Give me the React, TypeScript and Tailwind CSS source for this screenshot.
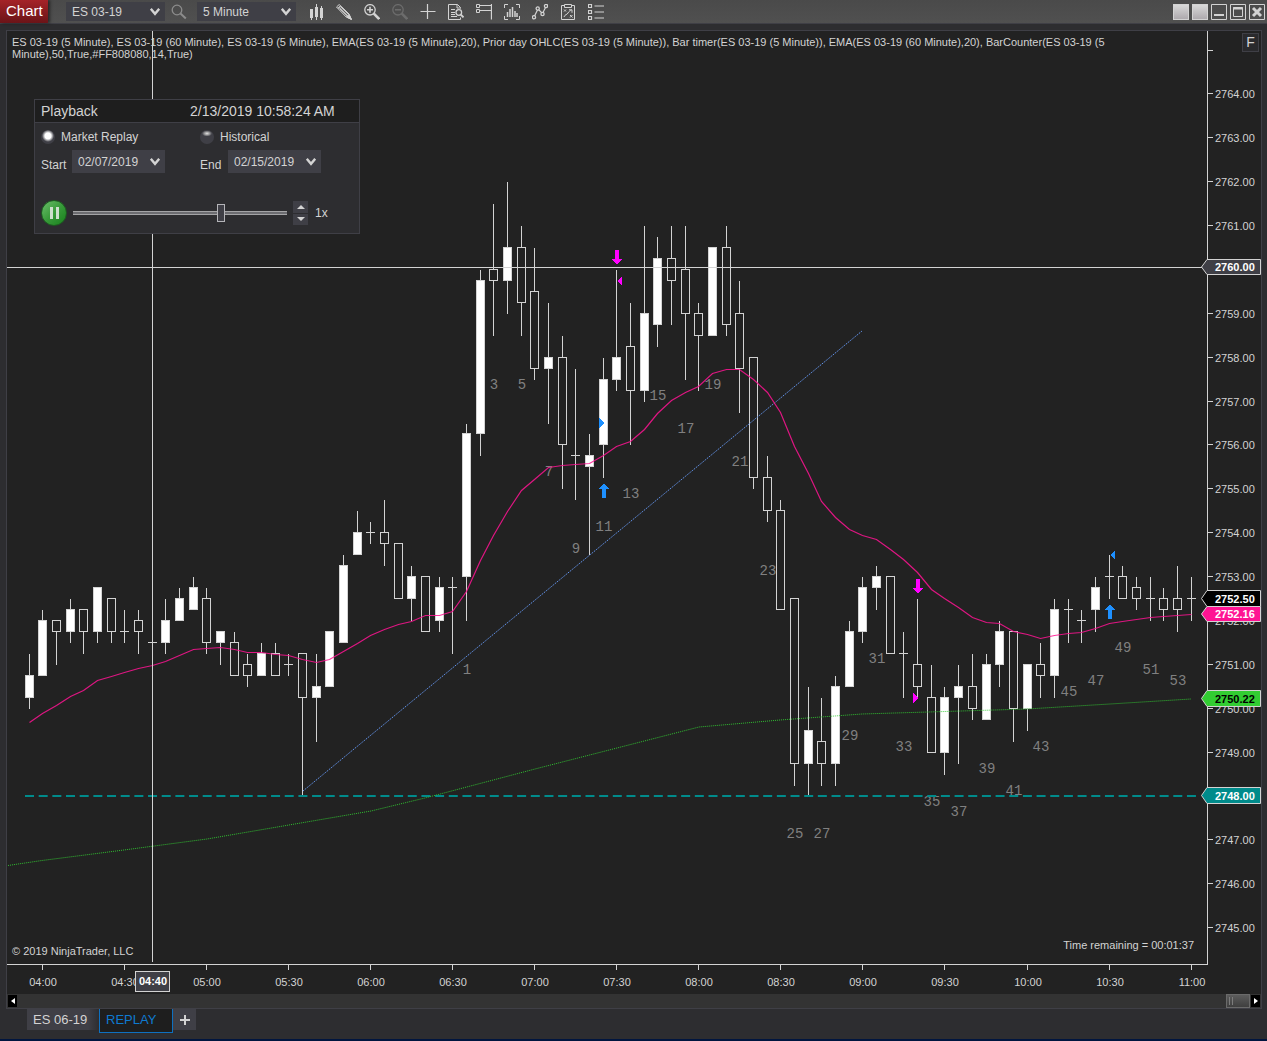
import React, { useState } from "react";

/* ---------- market data (values are quarter-point ticks above 2748.00) ---------- */

// [high, body top, body bottom, low, up?]
type Candle = [number, number, number, number, 0 | 1];

const CANDLES: Candle[] = [
  [13, 11, 9, 8, 1], [17, 16, 11, 11, 1], [16, 16, 15, 12, 0], [18, 17, 15, 14, 1], [17, 17, 15, 13, 0],
  [19, 19, 15, 14, 1], [18, 18, 15, 14, 0], [17, 15, 15, 14, 0], [17, 16, 15, 13, 0], [14, 14, 14, 14, 0],
  [18, 16, 14, 13, 1], [19, 18, 16, 16, 1], [20, 19, 17, 17, 1], [19, 18, 14, 13, 0], [15, 15, 14, 12, 1],
  [15, 14, 11, 11, 0], [13, 12, 11, 10, 0], [14, 13, 11, 11, 1], [14, 13, 11, 11, 0], [13, 12, 12, 11, 0],
  [13, 13, 9, 0, 0], [13, 10, 9, 5, 1], [15, 15, 10, 10, 1], [22, 21, 14, 14, 1], [26, 24, 22, 22, 1],
  [25, 24, 24, 23, 0], [27, 24, 23, 21, 0], [23, 23, 18, 18, 0], [21, 20, 18, 16, 1], [20, 20, 15, 15, 0],
  [20, 19, 16, 15, 1], [20, 19, 19, 13, 0], [34, 33, 20, 16, 1], [48, 47, 33, 31, 1], [54, 48, 47, 42, 0],
  [56, 50, 47, 44, 1], [52, 50, 45, 42, 0], [50, 46, 39, 38, 0], [45, 40, 39, 34, 1], [42, 40, 32, 28, 0],
  [39, 31, 31, 27, 0], [33, 31, 30, 22, 1], [40, 38, 32, 29, 1], [48, 40, 38, 37, 1], [45, 41, 37, 32, 0],
  [52, 44, 37, 36, 1], [51, 49, 43, 41, 1], [52, 49, 47, 43, 0], [52, 48, 44, 38, 0], [45, 44, 42, 37, 0],
  [50, 50, 42, 42, 1], [52, 50, 43, 42, 0], [47, 44, 39, 35, 0], [40, 40, 29, 28, 0], [31, 29, 26, 25, 0],
  [27, 26, 17, 17, 0], [18, 18, 3, 1, 0], [10, 6, 3, 0, 1], [9, 5, 3, 1, 0], [11, 10, 3, 1, 1],
  [16, 15, 10, 10, 1], [20, 19, 15, 14, 1], [21, 20, 19, 17, 1], [20, 20, 13, 13, 0], [15, 13, 13, 9, 0],
  [18, 12, 10, 9, 0], [12, 9, 4, 4, 0], [10, 9, 4, 2, 1], [12, 10, 9, 3, 1], [13, 10, 8, 7, 0],
  [13, 12, 7, 7, 1], [16, 15, 12, 10, 1], [15, 15, 8, 5, 0], [12, 12, 8, 6, 1], [14, 12, 11, 9, 0],
  [18, 17, 11, 9, 1], [18, 17, 17, 14, 0], [17, 16, 16, 14, 0], [20, 19, 17, 15, 1], [22, 20, 20, 18, 0],
  [21, 20, 18, 18, 0], [20, 19, 18, 17, 0], [20, 18, 18, 16, 0], [19, 18, 17, 16, 0], [21, 18, 17, 15, 0],
  [20, 18, 18, 16, 0],
];

const EMA: number[] = [
  722, 713, 705, 696, 690, 680, 676, 672, 668, 665, 661, 655, 649, 648, 647, 649, 652, 652, 654, 655, 659, 662,
  659, 651, 643, 635, 629, 624, 621, 615, 615, 611, 591, 560, 535, 511, 490, 479, 467, 465, 464, 463, 455, 446,
  441, 429, 413, 400, 392, 386, 373, 369, 369, 379, 392, 412, 446, 473, 501, 517, 529, 535, 539, 549, 559, 572,
  589, 598, 607, 617, 622, 623, 631, 634, 638, 635, 633, 632, 628, 623, 621, 619, 617, 616, 615, 614,
];

// [bar number, baseline]
const BAR_NUMBERS: [number, number][] = [
  [1, 674], [3, 389], [5, 389], [7, 476], [9, 553], [11, 531], [13, 498], [15, 400], [17, 433], [19, 389],
  [21, 466], [23, 575], [25, 838], [27, 838], [29, 740], [31, 663], [33, 751], [35, 806], [37, 816], [39, 773],
  [41, 795], [43, 751], [45, 696], [47, 685], [49, 652], [51, 674], [53, 685],
];

const TIMES = ["04:00", "04:30", "05:00", "05:30", "06:00", "06:30", "07:00", "07:30", "08:00", "08:30", "09:00", "09:30", "10:00", "10:30", "11:00"];

const barX = (i: number) => Math.floor(29.1 + i * 13.67);
const tickY = (t: number) => Math.floor(796 - t * 10.97);

/* ---------- chart ---------- */

function CandleMark({ c, i }: { c: Candle; i: number }) {
  const [high, top, bottom, low, up] = c;
  const x = barX(i);
  const yTop = tickY(top);
  const yBottom = tickY(bottom);
  return (
    <g stroke="#d3d3d3" shapeRendering="crispEdges">
      {high > top && <path d={`M${x + 0.5} ${tickY(high) + 1}V${yTop}`} />}
      {low < bottom && <path d={`M${x + 0.5} ${yBottom}V${tickY(low) + 1}`} />}
      {top === bottom ? (
        <path d={`M${x - 4} ${yTop + 0.5}H${x + 5}`} />
      ) : (
        <rect x={x - 3.5} y={yTop + 0.5} width={8} height={yBottom - yTop} fill={up ? "#ffffff" : "none"} />
      )}
    </g>
  );
}

function PriceTag({ y, h, fill, color = "#ffffff", children }: { y: number; h: number; fill: string; color?: string; children: string }) {
  return (
    <g>
      <path d={`M1201.5 ${y + h / 2}L1207 ${y + 0.5}H1260.5V${y + h - 0.5}H1207Z`} fill={fill} stroke="#d3d3d3" />
      <text x={1215} y={y + h / 2 + 4} fontSize={11} fontWeight={700} fill={color}>
        {children}
      </text>
    </g>
  );
}

const arrowDown = (x: number, y: number) => `M${x - 2} ${y}h4v9h3l-5 6l-5-6h3z`;
const arrowUp = (x: number, y: number) => `M${x} ${y}l5 6h-3v9h-4v-9h-3z`;

function Chart() {
  const ticks = Array.from({ length: 21 }, (_, k) => 2765 - k);
  return (
    <svg viewBox="7 31 1254 963" className="block w-full bg-[#222222]" fontFamily='"Liberation Sans", Arial, sans-serif' role="img" aria-label="ES 03-19 5 minute chart">
      <g fill="#d3d3d3" fontSize={11}>
        <text x={12} y={955}>© 2019 NinjaTrader, LLC</text>
        <text x={1194} y={949} textAnchor="end">Time remaining = 00:01:37</text>
      </g>

      {CANDLES.map((c, i) => (
        <CandleMark key={i} c={c} i={i} />
      ))}

      <g fontFamily='"Liberation Mono", "Courier New", monospace' fontSize={14} fill="#808080" textAnchor="middle">
        {BAR_NUMBERS.map(([n, y]) => (
          <text key={n} x={barX(n + 31) + 1} y={y}>{n}</text>
        ))}
      </g>

      <path d="M25 796H1197" stroke="#008b8b" strokeWidth={2} strokeDasharray="9 4.67" />
      <polyline
        points="8,865.5 42,860.5 124,850 207,839 289,825 371,811 425,798 535,769 699,727 780,720 862,714 945,711.5 1027,709 1110,704 1191,699"
        fill="none" stroke="#32cd32" strokeOpacity={0.9} strokeDasharray="1 1"
      />
      <path d="M303 791L862 331" stroke="#6495ed" strokeDasharray="1.4 1" />
      <polyline points={EMA.map((y, i) => `${barX(i) + 0.5},${y + 0.5}`).join(" ")} fill="none" stroke="#ff1493" strokeOpacity={0.85} strokeWidth={1.2} />

      <g shapeRendering="crispEdges">
        <path fill="#ff00ff" d={arrowDown(617, 250)} />
        <path fill="#ff00ff" d={arrowDown(918, 579)} />
        <path fill="#ff00ff" d="M617 281l5-5v10z" />
        <path fill="#ff00ff" d="M918 698l-5-5v10z" />
        <path fill="#1e90ff" d={arrowUp(604, 483)} />
        <path fill="#1e90ff" d={arrowUp(1110, 604)} />
        <path fill="#1e90ff" d="M604 423l-5-5v10z" />
        <path fill="#1e90ff" d="M1110 555l5-5v10z" />
      </g>

      <g stroke="#d3d3d3" shapeRendering="crispEdges">
        <path d="M152.5 31V962M7 267.5H1207" />
        <path d="M1207.5 31V965M7 964.5H1208" />
        {ticks.map((p) => (
          <path key={p} d={`M1208 ${tickY((p - 2748) * 4) + 0.5}h5`} />
        ))}
        {TIMES.map((t, k) => (
          <path key={t} d={`M${barX(1 + k * 6) + 0.5} 965v5`} />
        ))}
      </g>

      <g fill="#d3d3d3" fontSize={11}>
        {ticks
          .filter((p) => p !== 2765 && p !== 2760 && p !== 2748)
          .map((p) => (
            <text key={p} x={1215} y={tickY((p - 2748) * 4) + 5}>{p.toFixed(2)}</text>
          ))}
        {TIMES.map((t, k) => (
          <text key={t} x={barX(1 + k * 6) + 1} y={986} textAnchor="middle">{t}</text>
        ))}
      </g>

      <PriceTag y={259} h={16} fill="#3f3f46">2760.00</PriceTag>
      <PriceTag y={606} h={16} fill="#ff1493">2752.16</PriceTag>
      <PriceTag y={590} h={17} fill="#000000">2752.50</PriceTag>
      <PriceTag y={690} h={17} fill="#32cd32" color="#000000">2750.22</PriceTag>
      <PriceTag y={787} h={17} fill="#008b8b">2748.00</PriceTag>

      <rect x={135.5} y={971.5} width={34} height={20} fill="#3f3f46" stroke="#d3d3d3" />
      <text x={153} y={985} fontSize={11} fontWeight={700} fill="#ffffff" textAnchor="middle">04:40</text>
    </svg>
  );
}

/* ---------- controls ---------- */

function Select({ label, value, options, box, id }: { label: string; value: string; options: string[]; box: string; id: string }) {
  return (
    <div className={`relative shrink-0 bg-[#3f3f46] ${box}`}>
      <select id={id} aria-label={label} defaultValue={value} className="block h-full w-full cursor-pointer appearance-none bg-transparent pr-5 pl-[6px] text-[12px] text-[#d3d3d3] outline-none">
        {options.map((o) => (
          <option key={o}>{o}</option>
        ))}
      </select>
      <svg viewBox="0 0 10 8" className="pointer-events-none absolute top-1/2 right-[5px] h-2 w-[10px] -translate-y-1/2" fill="none" stroke="#d3d3d3" strokeWidth="2.4">
        <path d="M0.8 0.8L5 5.8L9.2 0.8" />
      </svg>
    </div>
  );
}

const ICONS: { name: string; dim?: boolean; art: React.ReactNode }[] = [
  {
    name: "Chart style",
    art: (
      <g fill="currentColor" stroke="none">
        <path d="M2 5h3v9h-1v2h-1v-2h-1zM7 3h1v-3h1v3h1v10h-1v3h-1v-3h-1zM12 4h1v-2h1v2h1v10h-1v2h-1v-2h-1z" />
      </g>
    ),
  },
  {
    name: "Drawing tools",
    art: (
      <>
        <path d="M0.5 3L3.2 0.5L13 10L15.3 15.3L10.2 13Z" />
        <path d="M2 4.4L4.6 2M3.6 4.2L11.6 12M5 2.9L12.8 10.4" strokeWidth="1.2" />
        <path d="M10.6 13L13 10.4L15.6 15.6Z" fill="currentColor" />
      </>
    ),
  },
  {
    name: "Zoom in",
    art: (
      <>
        <circle cx="6" cy="5.8" r="5.2" strokeWidth="1.3" />
        <path d="M3 5.8h6M6 2.8v6" strokeWidth="1.6" />
        <path d="M9.8 9.6L15.2 15" strokeWidth="2.6" />
      </>
    ),
  },
  {
    name: "Zoom out",
    dim: true,
    art: (
      <>
        <circle cx="6" cy="5.8" r="5.2" strokeWidth="1.3" />
        <path d="M3 5.8h6" strokeWidth="1.6" />
        <path d="M9.8 9.6L15.2 15" strokeWidth="2.6" />
      </>
    ),
  },
  { name: "Crosshair", art: <path d="M0.5 7.5h15M7.5 0v15" strokeWidth="1.2" /> },
  {
    name: "Data box",
    art: (
      <>
        <path d="M12.5 4.5V3.5L9.5 0.5H0.5V15.5H12.5V13.5M9 0.5V4H12.5" />
        <path d="M3 5.5h4M3 8.5h4M3 10.5h4M3 12.5h6" />
        <circle cx="10.8" cy="8.5" r="2.8" strokeWidth="1.3" />
        <path d="M12.8 10.6L15.5 13.4" strokeWidth="2" />
      </>
    ),
  },
  {
    name: "Chart trader",
    art: (
      <>
        <path d="M0.5 0.5h3v3h-3zM0.5 5.5h3v3h-3zM4 1.5h12M4 6.5h11.5" />
        <path d="M15.5 0V15.5" strokeWidth="1.3" />
      </>
    ),
  },
  {
    name: "Data series",
    art: (
      <>
        <path d="M4 0.5H0.5V4M12 0.5H15.5V4M4 15.5H0.5V12M12 15.5H15.5V12" />
        <path d="M3.5 8v5M6 5v8M8.5 3v10M11 7v6M13 9v4" strokeWidth="1.5" />
      </>
    ),
  },
  {
    name: "Indicators",
    art: (
      <>
        <path d="M2 13L6 5L10.5 9.5L14 2.5" strokeWidth="1.2" />
        <g fill="#4d4d4d" strokeWidth="1.3">
          <circle cx="2" cy="13.3" r="1.6" />
          <circle cx="5.7" cy="4.5" r="1.6" />
          <circle cx="10.5" cy="10" r="1.6" />
          <circle cx="14" cy="2" r="1.6" />
        </g>
      </>
    ),
  },
  {
    name: "Strategies",
    art: (
      <>
        <path d="M4 1.5H1.5V15.5H14.5V1.5H12M4.5 0.5h7v3h-7z" />
        <path d="M4 5.5l2 2M6 5.5l-2 2M10 11l2.5 2.5M12.5 11L10 13.5M4 13c1-3 3-2 4-4s2-2 3.5-3M9 5.8h3v3" />
      </>
    ),
  },
  {
    name: "Properties",
    art: <path d="M0.5 0.5h3v3h-3zM0.5 6.5h3v3h-3zM0.5 12.5h3v3h-3zM6.5 2h9.5M6.5 8h9.5M6.5 14h9.5" strokeWidth="1.2" />,
  },
];

function Toolbar() {
  return (
    <header className="flex h-6 items-stretch border-b border-[#3f3f46] bg-gradient-to-b from-[#4a4a4a] to-[#505050]">
      <h1 className="flex w-12 shrink-0 items-center bg-gradient-to-b from-[#a52328] to-[#6b1418] pl-[6px] text-[15px] text-white shadow-[2px_0_3px_rgba(0,0,0,0.5)]">
        Chart
      </h1>
      <div className="ml-[18px] flex items-center">
        <Select id="instrument" label="Instrument" value="ES 03-19" options={["ES 03-19", "ES 06-19"]} box="h-[19px] w-[99px]" />
        <button type="button" aria-label="Search" className="flex w-8 justify-center pr-1 text-[#8c8c8c]">
          <svg viewBox="0 0 16 16" className="size-4" fill="none" stroke="currentColor">
            <circle cx="6" cy="6" r="4.8" strokeWidth="1.3" />
            <path d="M9.5 9.5L14.8 14.5" strokeWidth="2" />
          </svg>
        </button>
        <Select id="interval" label="Interval" value="5 Minute" options={["5 Minute", "60 Minute"]} box="h-[19px] w-[99px]" />
      </div>
      <nav className="ml-[6px] flex items-center" aria-label="Chart tools">
        {ICONS.map(({ name, dim, art }) => (
          <button key={name} type="button" aria-label={name} disabled={dim} className={dim ? "flex w-7 justify-center text-[#6c6c6c]" : "flex w-7 justify-center text-[#d3d3d3]"}>
            <svg viewBox="0 0 16 16" className="size-4" fill="none" stroke="currentColor">
              {art}
            </svg>
          </button>
        ))}
      </nav>
      <div className="ml-auto flex items-center gap-[3px] pr-[2px]">
        <button type="button" aria-label="Instrument link" className="size-4 border border-[#d3d3d3] bg-gradient-to-b from-[#d8d8d8] to-[#aeaaae]" />
        <button type="button" aria-label="Interval link" className="size-4 border border-[#d3d3d3] bg-gradient-to-b from-[#d8d8d8] to-[#aeaaae]" />
        <button type="button" aria-label="Minimize" className="size-4">
          <svg viewBox="0 0 16 16" className="size-4" fill="none" stroke="#d3d3d3">
            <path d="M0.5 0.5h15v15h-15z" />
            <path d="M3 11h10" strokeWidth="2" />
          </svg>
        </button>
        <button type="button" aria-label="Maximize" className="size-4">
          <svg viewBox="0 0 16 16" className="size-4" fill="none" stroke="#d3d3d3">
            <path d="M0.5 0.5h15v15h-15zM3.5 3.5h9v9h-9z" />
            <path d="M3 4.5h10" strokeWidth="2" />
          </svg>
        </button>
        <button type="button" aria-label="Close" className="size-4">
          <svg viewBox="0 0 16 16" className="size-4" fill="none" stroke="#d3d3d3">
            <path d="M0.5 0.5h15v15h-15z" />
            <path d="M4 4L12 12M12 4L4 12" strokeWidth="3" />
          </svg>
        </button>
      </div>
    </header>
  );
}

const RADIO =
  "size-[14px] shrink-0 appearance-none rounded-full bg-[radial-gradient(ellipse_5px_3px_at_50%_25%,#e0e0e0_0%,#9a9a9c_50%,#3f3f46_100%)] checked:bg-[radial-gradient(ellipse_6px_6px_at_50%_42%,#ffffff_0%,#ffffff_50%,#3f3f46_100%)]";

function Playback() {
  const [speed, setSpeed] = useState(1);
  return (
    <section className="absolute top-[68px] left-[27px] w-[326px] border border-[#3f3f46] bg-[#2d2d30] text-[12px] text-[#d3d3d3]">
      <div className="flex h-[23px] items-center border-b border-[#3f3f46] bg-[#1e1e1e] pl-[6px] text-[14px]">
        <h2 className="w-[149px]">Playback</h2>
        <time>2/13/2019 10:58:24 AM</time>
      </div>
      <div className="grid h-[110px] grid-cols-[159px_1fr] grid-rows-[27px_25px_1fr] pl-[6px]">
        <label className="flex items-center gap-[6px]">
          <input type="radio" name="source" defaultChecked className={RADIO} />
          Market Replay
        </label>
        <label className="flex items-center gap-[6px]">
          <input type="radio" name="source" className={RADIO} />
          Historical
        </label>
        <div className="flex items-start">
          <label htmlFor="start" className="w-[31px] pt-[6px]">Start</label>
          <Select id="start" label="Start" value="02/07/2019" options={["02/07/2019", "02/08/2019"]} box="h-[23px] w-[93px]" />
        </div>
        <div className="flex items-start">
          <label htmlFor="end" className="w-[28px] pt-[6px]">End</label>
          <Select id="end" label="End" value="02/15/2019" options={["02/15/2019", "02/14/2019"]} box="h-[23px] w-[93px]" />
        </div>
        <div className="col-span-2 flex items-center pt-[18px]">
          <button type="button" aria-label="Pause" className="flex size-[26px] items-center justify-center gap-[3px] rounded-full border border-[#1c5c20] bg-gradient-to-br from-[#6abf6a] via-[#389a3a] to-[#14801a]">
            <span className="h-3 w-[3px] bg-[#cfe0cf]" />
            <span className="h-3 w-[3px] bg-[#cfe0cf]" />
          </button>
          <input
            type="range"
            aria-label="Speed"
            min={0}
            max={100}
            defaultValue={70}
            className="ml-[6px] h-[18px] w-[214px] appearance-none bg-[linear-gradient(to_bottom,transparent_7px,#a4a4a6_7px,#a4a4a6_8px,#6c6c70_8px,#6c6c70_10px,#a4a4a6_10px,#a4a4a6_11px,transparent_11px)] [&::-webkit-slider-thumb]:h-[18px] [&::-webkit-slider-thumb]:w-2 [&::-webkit-slider-thumb]:appearance-none [&::-webkit-slider-thumb]:border [&::-webkit-slider-thumb]:border-[#b4b4b8] [&::-webkit-slider-thumb]:bg-[#3f3f46]"
          />
          <div className="ml-[6px] flex h-6 w-[15px] flex-col divide-y divide-[#2d2d30] bg-[#3f3f46]">
            <button type="button" aria-label="Faster" onClick={() => setSpeed(speed + 1)} className="flex flex-1 items-center justify-center">
              <svg viewBox="0 0 8 4" className="h-1 w-2"><path d="M0 4L4 0L8 4Z" fill="#d3d3d3" /></svg>
            </button>
            <button type="button" aria-label="Slower" onClick={() => setSpeed(Math.max(1, speed - 1))} className="flex flex-1 items-center justify-center">
              <svg viewBox="0 0 8 4" className="h-1 w-2"><path d="M0 0L4 4L8 0Z" fill="#d3d3d3" /></svg>
            </button>
          </div>
          <output className="ml-[7px]">{speed}x</output>
        </div>
      </div>
    </section>
  );
}

function ScrollStrip() {
  return (
    <div className="flex h-[14px] items-center bg-[#333333] px-px">
      <button type="button" aria-label="Scroll left" className="flex h-3 w-[9px] items-center justify-center bg-black">
        <svg viewBox="0 0 4 6" className="h-[6px] w-1"><path d="M4 0V6L0 3Z" fill="#fff" /></svg>
      </button>
      <div className="flex h-full flex-1 justify-end">
        <div className="flex w-6 items-center gap-[2px] border border-[#6a6a6a] bg-gradient-to-b from-[#5c5c5c] to-[#3f3f3f] pl-[2px]">
          <span className="h-2 w-px bg-[#7c7c7c]" />
          <span className="h-2 w-px bg-[#7c7c7c]" />
        </div>
      </div>
      <button type="button" aria-label="Scroll right" className="ml-px flex h-3 w-[9px] items-center justify-center bg-black">
        <svg viewBox="0 0 4 6" className="h-[6px] w-1"><path d="M0 0V6L4 3Z" fill="#fff" /></svg>
      </button>
    </div>
  );
}

export default function App() {
  return (
    <div className="flex min-h-screen flex-col bg-[#2d2d30] font-['Liberation_Sans',Arial,sans-serif]">
      <Toolbar />
      <main className="mt-[6px] mr-[5px] ml-[6px] border border-[#3f3f46]">
        <div className="relative">
          <Chart />
          <p className="pointer-events-none absolute top-[5px] right-[60px] left-[5px] text-[11px] leading-3 text-[#d3d3d3]">
            ES 03-19 (5 Minute), ES 03-19 (60 Minute), ES 03-19 (5 Minute), EMA(ES 03-19 (5 Minute),20), Prior day OHLC(ES 03-19 (5
            Minute)), Bar timer(ES 03-19 (5 Minute)), EMA(ES 03-19 (60 Minute),20), BarCounter(ES 03-19 (5
            <br />
            Minute),50,True,#FF808080,14,True)
          </p>
          <button type="button" aria-label="Fixed scale" className="absolute top-[2px] right-[2px] flex h-[19px] w-[17px] items-center justify-center border border-[#3f3f46] bg-[#2a2a2d] text-[14px] text-[#d3d3d3]">
            F
          </button>
          <Playback />
        </div>
        <ScrollStrip />
      </main>
      <nav className="flex items-start pl-[27px] text-[13px]" aria-label="Chart tabs">
        <button type="button" className="h-[21px] w-[72px] bg-gradient-to-r from-[#3f3f46] from-85% to-[#2d2d30] pl-[6px] text-left text-[#d3d3d3]">
          ES 06-19
        </button>
        <button type="button" className="h-6 w-[74px] border border-t-0 border-[#0e70c0] bg-[#1e1e1e] pb-[2px] pl-[6px] text-left text-[#0e7ad0]">
          REPLAY
        </button>
        <button type="button" aria-label="New tab" className="flex h-[21px] w-[23px] items-center justify-center bg-[#3f3f46]">
          <svg viewBox="0 0 10 10" className="size-[10px]" stroke="#d3d3d3" strokeWidth="2"><path d="M5 0V10M0 5H10" /></svg>
        </button>
      </nav>
      <div className="mt-auto h-[2px] bg-[#00153f]" />
    </div>
  );
}
